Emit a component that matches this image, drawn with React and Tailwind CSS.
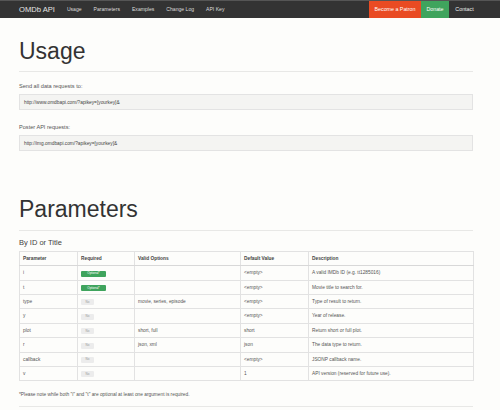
import React from "react";

const rows = [
  ["i", "opt", "", "<empty>", "A valid IMDb ID (e.g. tt1285016)"],
  ["t", "opt", "", "<empty>", "Movie title to search for."],
  ["type", "no", "movie, series, episode", "<empty>", "Type of result to return."],
  ["y", "no", "", "<empty>", "Year of release."],
  ["plot", "no", "short, full", "short", "Return short or full plot."],
  ["r", "no", "json, xml", "json", "The data type to return."],
  ["callback", "no", "", "<empty>", "JSONP callback name."],
  ["v", "no", "", "1", "API version (reserved for future use)."],
];

function Badge({ kind }) {
  if (kind === "opt")
    return (
      <span className="inline-flex items-center justify-center h-[6px] w-[25px] bg-[#3fa45d] text-white text-[3px] leading-none rounded-[1px]">
        Optional*
      </span>
    );
  return (
    <span className="inline-flex items-center justify-center h-[6px] w-[13px] bg-[#ececec] text-[#999] text-[3px] leading-none rounded-[1px]">
      No
    </span>
  );
}

export default function App() {
  const font = { fontFamily: '"Liberation Sans", Arial, sans-serif' };
  return (
    <div className="w-[500px] h-[410px] overflow-hidden bg-[#fdfdfb] text-[#333]" style={font}>
      <nav className="h-[18px] bg-[#333] border-t border-[#555] flex items-center pl-[19px] pr-[20px]">
        <span className="text-[7.6px] text-[#e5e5e5] mr-[6px] leading-none">OMDb API</span>
        {["Usage", "Parameters", "Examples", "Change Log", "API Key"].map((t) => (
          <span key={t} className="px-[6px] text-[5.1px] text-[#ddd] leading-none">{t}</span>
        ))}
        <div className="ml-auto flex h-full">
          <span className="h-full w-[52px] flex items-center justify-center bg-[#e94b23] text-white text-[5.3px]">Become a Patron</span>
          <span className="h-full w-[28px] flex items-center justify-center bg-[#3fa45d] text-white text-[5.3px]">Donate</span>
          <span className="h-full w-[31px] flex items-center justify-center text-[#eee] text-[5.3px]">Contact</span>
        </div>
      </nav>

      <div className="ml-[19px] w-[454px]">
        <h1 className="mt-[20px] text-[23px] leading-[26.4px] text-[#333]">Usage</h1>
        <div className="mt-[7px] h-px bg-[#e8e8e6]" />
        <p className="mt-[10px] text-[5.6px] leading-[8px] text-[#555]">Send all data requests to:</p>
        <div className="mt-[4px] h-[16px] bg-[#f4f4f2] border border-[#e3e3e3] flex items-center pl-[4px] text-[4.8px] text-[#444]">
          http://www.omdbapi.com/?apikey=[yourkey]&amp;
        </div>
        <p className="mt-[13px] text-[5.6px] leading-[8px] text-[#555]">Poster API requests:</p>
        <div className="mt-[4px] h-[16px] bg-[#f4f4f2] border border-[#e3e3e3] flex items-center pl-[4px] text-[4.8px] text-[#444]">
          http://img.omdbapi.com/?apikey=[yourkey]&amp;
        </div>

        <h1 className="mt-[45px] text-[23px] leading-[26.4px] text-[#333]">Parameters</h1>
        <div className="mt-[7px] h-px bg-[#e8e8e6]" />
        <p className="mt-[7px] text-[7.5px] leading-[9px] text-[#444]">By ID or Title</p>

        <table className="mt-[4px] w-[454px] border-collapse table-fixed text-[4.8px] text-[#555]">
          <colgroup>
            <col className="w-[58px]" />
            <col className="w-[57px]" />
            <col className="w-[106px]" />
            <col className="w-[68px]" />
            <col className="w-[165px]" />
          </colgroup>
          <thead>
            <tr className="h-[14.4px]">
              {["Parameter", "Required", "Valid Options", "Default Value", "Description"].map((h) => (
                <th key={h} className="border border-[#e2e2e2] border-b-[#d8d8d8] text-left font-bold pl-[3px] text-[#444] p-0">
                  {h}
                </th>
              ))}
            </tr>
          </thead>
          <tbody>
            {rows.map((r) => (
              <tr key={r[0]} className="h-[14.4px]">
                <td className="border border-[#e2e2e2] pl-[3px] p-0">{r[0]}</td>
                <td className="border border-[#e2e2e2] pl-[3px] p-0"><Badge kind={r[1]} /></td>
                <td className="border border-[#e2e2e2] pl-[3px] p-0">{r[2]}</td>
                <td className="border border-[#e2e2e2] pl-[3px] p-0">{r[3]}</td>
                <td className="border border-[#e2e2e2] pl-[3px] p-0">{r[4]}</td>
              </tr>
            ))}
          </tbody>
        </table>

        <p className="mt-[11px] text-[4.8px] leading-[6px] text-[#555]">
          *Please note while both "i" and "t" are optional at least one argument is required.
        </p>
        <div className="mt-[8px] h-px bg-[#e8e8e6]" />
      </div>
    </div>
  );
}
